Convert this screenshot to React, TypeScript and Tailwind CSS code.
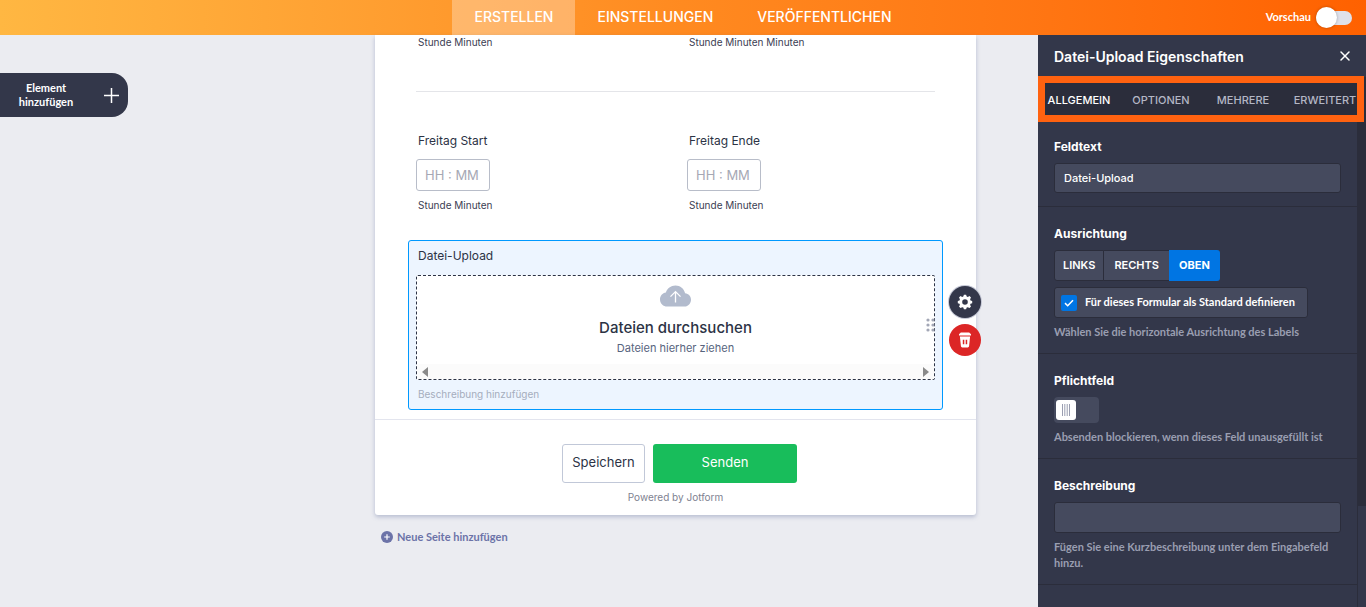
import type { ReactNode } from "react";
import { X } from "lucide-react";

function TimeField({ id, label, sub }: { id: string; label: string; sub: string }) {
  return (
    <div>
      <label htmlFor={id} className="block px-[2px] text-[12px] leading-5 text-[#2c3345]">
        {label}
      </label>
      <input
        id={id}
        type="text"
        placeholder="HH : MM"
        className="mt-2 block h-8 w-[74px] rounded-[3px] border border-[#b8bdc9] bg-white px-2 text-[13px] text-[#2c3345] placeholder:text-[#a6a8b4]"
      />
      <span className="mt-[7px] block px-[2px] text-[10px] leading-[14px] text-[#3c4053]">{sub}</span>
    </div>
  );
}

function Section({ children }: { children: ReactNode }) {
  return <section className="border-b border-[#2b2d3b] px-4 pt-[19px] pb-[13px]">{children}</section>;
}

const titleClass = "block text-[12px] font-bold leading-4 text-white";
const helpClass = "mt-[6px] font-['Lato',sans-serif] text-[11px] font-bold leading-4 text-[#9a9eb1]";
const panelInput =
  "mt-2 block w-full rounded-[3px] border border-[#2b2d3b] bg-[#454a5e] px-[9px] text-[11px] font-medium text-white";

function Header() {
  const tabs = ["ERSTELLEN", "EINSTELLUNGEN", "VERÖFFENTLICHEN"];
  return (
    <header className="grid h-[35px] grid-cols-[1fr_auto_1fr] bg-linear-to-r from-[#ffb742] via-[#ff8a20] to-[#ff6100]">
      <nav className="col-start-2 flex">
        {tabs.map((t, i) => (
          <a
            key={t}
            href="#"
            className={`flex items-center px-[22px] pb-[2px] text-[14px] font-medium text-white ${i === 0 ? "bg-white/30" : ""}`}
          >
            {t}
          </a>
        ))}
      </nav>
      <label className="flex items-center justify-end gap-[5px] pr-[14px] font-['Lato',sans-serif] text-[11px] font-bold text-white">
        Vorschau
        <input type="checkbox" className="peer sr-only" />
        <span className="relative flex h-[14px] w-9 items-center rounded-full bg-[#dfe1ea]">
          <span className="size-[21px] shrink-0 rounded-full bg-white shadow-[0_0_3px_rgba(0,0,0,0.3)]" />
        </span>
      </label>
    </header>
  );
}

function UploadField() {
  return (
    <div className="relative -mx-2 mt-7 rounded-[3px] border border-[#0099ff] bg-[#edf5ff] px-[7px] pb-[7px]">
      <h3 className="px-[2px] pt-[5px] text-[12px] leading-5 text-[#2c3345]">Datei-Upload</h3>
      <div className="relative mt-[9px] rounded-[2px] border border-dashed border-[#2c3345] bg-white">
        <div className="flex h-[88px] flex-col items-center pt-[9px]">
          <svg width="31" height="22" viewBox="0 0 31 22">
            <path
              d="M15.5 0.5c4.7 0 8.7 3.3 9.6 7.8C28.500 8.600 31 11.400 31 14.700 31 18.300 28.200 21.500 24.600 21.500H7.200C3.200 21.500 0 18.400 0 14.400 0 10.900 2.500 8 5.900 7.500 7 3.400 10.900 0.500 15.500 0.500z"
              fill="#b2bbcd"
            />
            <path
              d="M15.500 17.500V6.700M10.500 11.600l5-5 5 5"
              fill="none"
              stroke="#fff"
              strokeWidth="1.300"
            />
          </svg>
          <button type="button" className="mt-[11px] text-[15px] font-medium leading-5 text-[#2c3345]">
            Dateien durchsuchen
          </button>
          <p className="mt-[2px] text-[11px] leading-4 text-[#57647e]">Dateien hierher ziehen</p>
        </div>
        <div className="flex h-[15px] items-center justify-between bg-[#fbfbfb] px-[5px]">
          <svg width="6" height="10" viewBox="0 0 6 10" fill="#8a8a8a">
            <path d="M6 0v10L0 5z" />
          </svg>
          <svg width="6" height="10" viewBox="0 0 6 10" fill="#8a8a8a">
            <path d="M0 0v10l6-5z" />
          </svg>
        </div>
        <svg
          className="absolute top-[42px] -right-px"
          width="9"
          height="14"
          viewBox="0 0 9 14"
          fill="#a3a7b6"
        >
          <circle cx="2" cy="2" r="1.600" />
          <circle cx="7" cy="2" r="1.600" />
          <circle cx="2" cy="7" r="1.600" />
          <circle cx="7" cy="7" r="1.600" />
          <circle cx="2" cy="12" r="1.600" />
          <circle cx="7" cy="12" r="1.600" />
        </svg>
      </div>
      <p className="mt-[6px] px-[2px] text-[10px] leading-4 text-[#a5adbd]">Beschreibung hinzufügen</p>
      <div className="absolute top-[45px] left-full ml-[7px] flex flex-col gap-[6px]">
        <button
          type="button"
          aria-label="Eigenschaften"
          className="flex size-8 items-center justify-center rounded-full bg-[#33374a] shadow-[0_0_0_1px_#c3c6d4]"
        >
          <svg width="16" height="16" viewBox="0 0 16 16" fill="#fff">
            <path
              fillRule="evenodd"
              d="M6.900 0.800h2.200l.6 1.800 1.100.4 1.700-.9 1.500 1.500-.9 1.700.4 1.100 1.700.6v2.200l-1.700.6-.4 1.100.9 1.700-1.500 1.500-1.700-.9-1.100.4-.6 1.700H6.900l-.6-1.700-1.100-.4-1.700.9L2 12.600l.9-1.700-.4-1.100L.8 9.200V7l1.700-.6.4-1.100L2 3.600l1.500-1.500 1.700.9 1.100-.4zM8 5.200a2.800 2.800 0 1 0 0 5.600 2.800 2.800 0 0 0 0-5.600z"
            />
          </svg>
        </button>
        <button
          type="button"
          aria-label="Löschen"
          className="flex size-8 items-center justify-center rounded-full bg-[#dc2626]"
        >
          <svg width="14" height="16" viewBox="0 0 14 16" fill="#fff">
            <path d="M2.800 0.600h8.400L13 2.200v1.300H1V2.200z" />
            <path
              fillRule="evenodd"
              d="M1.900 4.600h10.200l-1 9.400c-.1.800-.6 1.400-1.400 1.400H4.300c-.8 0-1.300-.6-1.400-1.400zM4.800 7.700v4.600h1.500V7.700zM7.700 7.700v4.600h1.500V7.700z"
            />
          </svg>
        </button>
      </div>
    </div>
  );
}

function FormCard() {
  return (
    <div className="rounded-b-[3px] bg-white shadow-[0_2px_4px_rgba(87,100,150,0.350)]">
      <div className="px-[41px]">
        <div className="grid grid-cols-2 gap-[23px] text-[10px] leading-[14px] text-[#3c4053]">
          <span className="px-[2px]">Stunde Minuten</span>
          <span className="px-[2px]">Stunde Minuten Minuten</span>
        </div>
        <hr className="mt-[42px] border-[#e4e5e9]" />
        <div className="mt-[39px] grid grid-cols-2 gap-[23px]">
          <TimeField id="start" label="Freitag Start" sub="Stunde Minuten" />
          <TimeField id="ende" label="Freitag Ende" sub="Stunde Minuten" />
        </div>
        <UploadField />
      </div>
      <div className="mt-[9px] border-t border-[#e3e5ee] pt-6 pb-[10px]">
        <div className="flex justify-center gap-2 pr-4 pl-6">
          <button
            type="button"
            className="h-[39px] w-[83px] rounded-[3px] border border-[#c1c8d8] pb-[2px] text-[13px] text-[#2c3345]"
          >
            Speichern
          </button>
          <button
            type="button"
            className="h-[39px] w-36 rounded-[3px] bg-[#18bd5b] pb-[2px] text-[13px] text-white"
          >
            Senden
          </button>
        </div>
        <p className="mt-[6px] text-center text-[10px] leading-4 text-[#808291]">Powered by Jotform</p>
      </div>
    </div>
  );
}

function PropertiesPanel() {
  const tabs = ["ALLGEMEIN", "OPTIONEN", "MEHRERE", "ERWEITERT"];
  return (
    <aside className="flex w-[328px] shrink-0 flex-col bg-[#33374a]">
      <div className="flex h-[42px] items-center justify-between pr-[13px] pl-4">
        <h2 className="text-[14px] font-semibold text-white">Datei-Upload Eigenschaften</h2>
        <button type="button" aria-label="Schließen" className="text-white">
          <X size={16} strokeWidth={2.25} />
        </button>
      </div>
      <nav className="relative grid h-[43px] grid-cols-4 bg-[#2b2d3b]">
        {tabs.map((t, i) => (
          <a
            key={t}
            href="#"
            className={`flex items-center justify-center pt-[3px] text-[11px] font-medium ${i === 0 ? "text-white" : "text-[#b4b7c5]"}`}
          >
            {t}
          </a>
        ))}
        <span className="pointer-events-none absolute -top-px right-[2px] -bottom-[2px] left-0 border-[7px] border-[#ff6210]" />
      </nav>
      <div className="flex flex-1">
        <div className="min-w-0 flex-1">
          <Section>
            <label htmlFor="feldtext" className={titleClass}>
              Feldtext
            </label>
            <input id="feldtext" type="text" defaultValue="Datei-Upload" className={`${panelInput} h-[30px]`} />
          </Section>
          <Section>
            <h3 className={titleClass}>Ausrichtung</h3>
            <div className="mt-2 flex h-[31px] text-[11px] font-semibold text-white">
              <button type="button" className="rounded-l-[3px] border border-[#2b2d3b] bg-[#454a5e] px-2">
                LINKS
              </button>
              <button type="button" className="border-y border-[#2b2d3b] bg-[#454a5e] px-[10px]">
                RECHTS
              </button>
              <button type="button" className="rounded-r-[3px] bg-[#0075e3] px-[10px] font-bold">
                OBEN
              </button>
            </div>
            <label className="mt-[6px] flex h-[31px] w-fit items-center gap-2 rounded-[3px] border border-[#2b2d3b] bg-[#454a5e] pr-3 pl-[6px] font-['Lato',sans-serif] text-[11px] font-bold whitespace-nowrap text-white">
              <input type="checkbox" defaultChecked className="peer sr-only" />
              <span className="flex size-4 items-center justify-center rounded-[2px] bg-[#0075e3]">
                <svg width="10" height="8" viewBox="0 0 10 8" fill="none" stroke="#fff" strokeWidth="1.500">
                  <path d="M1 4.100l2.700 2.600L9 1.200" />
                </svg>
              </span>
              Für dieses Formular als Standard definieren
            </label>
            <p className={helpClass}>Wählen Sie die horizontale Ausrichtung des Labels</p>
          </Section>
          <Section>
            <label htmlFor="pflicht" className={titleClass}>
              Pflichtfeld
            </label>
            <label
              htmlFor="pflicht"
              className="mt-2 flex h-[26px] w-[45px] items-center rounded-[4px] bg-[#454a5e] px-[2px]"
            >
              <input id="pflicht" type="checkbox" className="peer sr-only" />
              <span className="flex size-5 items-center justify-center rounded-[3px] bg-white">
                <svg width="8" height="12" viewBox="0 0 8 12" fill="#9a9eb1">
                  <path d="M0 0h1v12H0zM2.300 0h1v12h-1zM4.700 0h1v12h-1zM7 0h1v12H7z" />
                </svg>
              </span>
            </label>
            <p className={helpClass}>Absenden blockieren, wenn dieses Feld unausgefüllt ist</p>
          </Section>
          <Section>
            <label htmlFor="beschreibung" className={titleClass}>
              Beschreibung
            </label>
            <input id="beschreibung" type="text" className={`${panelInput} h-[31px]`} />
            <p className={helpClass}>
              Fügen Sie eine Kurzbeschreibung unter dem Eingabefeld hinzu.
            </p>
          </Section>
        </div>
        <div className="flex w-[9px] flex-col bg-[#2b2d3b]">
          <div className="grow-[386]" />
          <div className="ml-px grow-[101] bg-[#33374a]" />
        </div>
      </div>
    </aside>
  );
}

export default function App() {
  return (
    <div className="flex min-h-screen flex-col bg-[#ebecf1] font-['Inter',sans-serif]">
      <Header />
      <main className="grid flex-1 grid-cols-[1fr_minmax(0,601px)_1fr] pr-[15px]">
        <div className="pt-[38px]">
          <button
            type="button"
            className="flex h-11 w-32 items-center justify-between rounded-r-[16px] bg-[#33374a] pr-[9px] pl-4 font-['Lato',sans-serif] text-[11px] leading-[14px] font-bold text-white"
          >
            <span className="w-[60px] text-center">Element hinzufügen</span>
            <svg width="15" height="15" viewBox="0 0 15 15" stroke="#fff" strokeWidth="1.500">
              <path d="M7.500 0v15M0 7.500h15" />
            </svg>
          </button>
        </div>
        <div>
          <FormCard />
          <button
            type="button"
            className="mt-[14px] ml-[6px] flex items-center gap-1 font-['Lato',sans-serif] text-[11px] leading-4 font-bold text-[#6c73a8]"
          >
            <svg width="12" height="12" viewBox="0 0 12 12">
              <circle cx="6" cy="6" r="6" fill="#6c73a8" />
              <path d="M6 3.200v5.600M3.200 6h5.600" stroke="#fff" strokeWidth="1.200" />
            </svg>
            Neue Seite hinzufügen
          </button>
        </div>
        <div className="-mr-[15px] flex justify-end">
          <PropertiesPanel />
        </div>
      </main>
    </div>
  );
}
